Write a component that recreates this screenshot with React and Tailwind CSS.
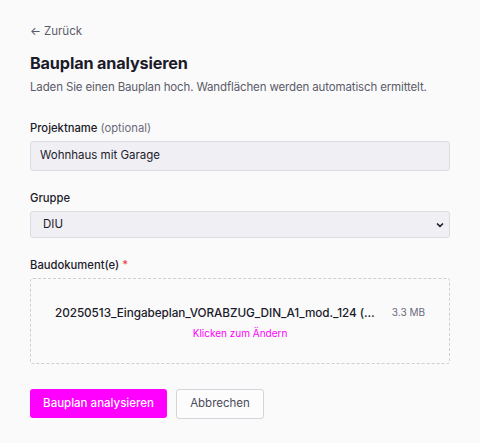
import React from "react";

export default function App() {
  return (
    <div className="min-h-[443px] w-[480px] bg-[#fafafa] px-[30px] pt-[23px] text-[#1c1b2b]" style={{ fontFamily: "Inter, 'Noto Sans', sans-serif" }}>
      <a className="flex items-center gap-[3px] text-[11.5px] leading-[16px] text-[#5c5b6b]">
        <span>←</span>
        <span>Zurück</span>
      </a>
      <h1 className="mt-[14px] text-[16.25px] font-bold leading-[20px] tracking-[-0.01em]">Bauplan analysieren</h1>
      <p className="mt-[6px] whitespace-nowrap text-[11.5px] leading-[16px] tracking-[-0.012em] text-[#5c5b6b]">
        Laden Sie einen Bauplan hoch. Wandflächen werden automatisch ermittelt.
      </p>

      <div className="mt-[25px]">
        <label className="block text-[11.25px] font-medium leading-[16px]">
          Projektname <span className="font-normal text-[#6b6a7a]">(optional)</span>
        </label>
        <div className="mt-[5px] flex h-[30px] items-center rounded-[3px] border border-[#dddce3] bg-[#f0eff4] px-[9px] text-[11.5px]">
          Wohnhaus mit Garage
        </div>
      </div>

      <div className="mt-[19px]">
        <label className="block text-[11.25px] font-medium leading-[16px]">Gruppe</label>
        <div className="mt-[5px] flex h-[27px] items-center justify-between rounded-[3px] border border-[#dddce3] bg-[#f0eff4] pl-[12px] pr-[5px] text-[11.5px]">
          <span>DIU</span>
          <svg width="8" height="6" viewBox="0 0 8 6" fill="none">
            <path d="M1 1.5 L4 4.3 L7 1.5" stroke="#1c1b2b" strokeWidth="1.6" />
          </svg>
        </div>
      </div>

      <div className="mt-[19px]">
        <label className="block text-[11.25px] font-medium leading-[16px]">
          Baudokument(e) <span className="text-[#ef4444]">*</span>
        </label>
        <div className="mt-[5px] flex h-[86px] flex-col items-center justify-center rounded-[3px] border border-dashed border-[#cfced6] px-[24px] pt-[2px]">
          <div className="flex w-full items-center gap-[16px]">
            <span className="min-w-0 flex-1 truncate text-[11.75px] font-medium leading-[16px] tracking-[-0.005em]">
              20250513_Eingabeplan_VORABZUG_DIN_A1_mod._124 (Werkplan).pdf
            </span>
            <span className="text-[10px] text-[#6b6a7a]">3.3 MB</span>
          </div>
          <div className="mt-[5px] text-[10px] leading-[14px] text-[#f0f]">Klicken zum Ändern</div>
        </div>
      </div>

      <div className="mt-[25px] flex items-start gap-[9px]">
        <button className="h-[29px] w-[137px] rounded-[3px] bg-[#ff00ff] text-[11.5px] font-medium text-white">
          Bauplan analysieren
        </button>
        <button className="h-[30px] w-[88px] rounded-[3px] border border-[#d5d4dc] bg-[#fcfcfc] text-[11.5px] text-[#4b4a5a]">
          Abbrechen
        </button>
      </div>
    </div>
  );
}
